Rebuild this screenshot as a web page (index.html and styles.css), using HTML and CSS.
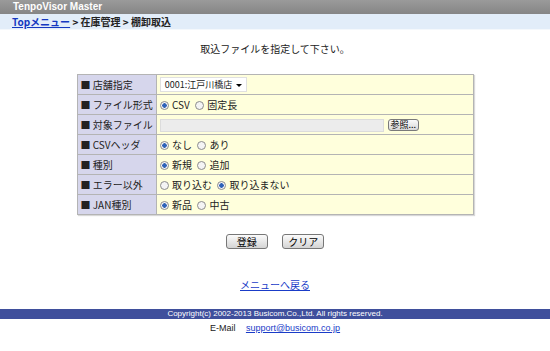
FILE: index.html
```html
<!DOCTYPE html>
<html lang="ja">
<head>
    <meta charset="UTF-8">
    <title>TenpoVisor Master</title>
    <link rel="stylesheet" href="styles.css">
</head>
<body>
    <header class="title-bar">TenpoVisor Master</header>
    <nav class="crumbs">
        <a href="#">Topメニュー</a> &gt; 在庫管理 &gt; 棚卸取込
    </nav>

    <p class="message">取込ファイルを指定して下さい。</p>

    <!-- Import form -->
    <table class="form-table">
        <tr>
            <th>■ 店舗指定</th>
            <td>
                <span class="select">0001:江戸川橋店<span class="arrow"></span></span>
            </td>
        </tr>
        <tr>
            <th>■ ファイル形式</th>
            <td>
                <label><input type="radio" name="fmt" checked> CSV</label>
                <label><input type="radio" name="fmt"> 固定長</label>
            </td>
        </tr>
        <tr>
            <th>■ 対象ファイル</th>
            <td>
                <span class="file-box"></span><button class="small-btn">参照...</button>
            </td>
        </tr>
        <tr>
            <th>■ CSVヘッダ</th>
            <td>
                <label><input type="radio" name="hdr" checked> なし</label>
                <label><input type="radio" name="hdr"> あり</label>
            </td>
        </tr>
        <tr>
            <th>■ 種別</th>
            <td>
                <label><input type="radio" name="kind" checked> 新規</label>
                <label><input type="radio" name="kind"> 追加</label>
            </td>
        </tr>
        <tr>
            <th>■ エラー以外</th>
            <td>
                <label><input type="radio" name="err"> 取り込む</label>
                <label><input type="radio" name="err" checked> 取り込まない</label>
            </td>
        </tr>
        <tr>
            <th>■ JAN種別</th>
            <td>
                <label><input type="radio" name="jan" checked> 新品</label>
                <label><input type="radio" name="jan"> 中古</label>
            </td>
        </tr>
    </table>

    <div class="actions">
        <button class="button">登録</button>
        <button class="button">クリア</button>
    </div>

    <p class="back"><a href="#">メニューへ戻る</a></p>

    <footer>
        <div class="copyright">Copyright(c) 2002-2013 Busicom.Co.,Ltd. All rights reserved.</div>
        <div class="mail">E-Mail <a href="#">support@busicom.co.jp</a></div>
    </footer>
</body>
</html>
```

FILE: styles.css
```css
/* General */
body {
    margin: 0;
    font-family: "Noto Sans CJK JP", "Liberation Sans", sans-serif;
    font-size: 11px;
    color: #222;
    background: #fff;
}

a {
    color: #1a3cc8;
}

.title-bar {
    height: 14px;
    line-height: 14px;
    padding-left: 13px;
    background: linear-gradient(to bottom, #9a9a9a, #858585);
    color: #fff;
    font-family: "Liberation Sans", sans-serif;
    font-size: 10px;
    font-weight: bold;
}

.crumbs {
    height: 15px;
    line-height: 15px;
    padding-left: 12px;
    background: #e2edf9;
    border-bottom: 1px solid #f4f8fc;
    font-weight: bold;
    font-size: 10px;
}

.crumbs a {
    color: #1438c0;
}

.message {
    margin: 11px 0 0;
    height: 15px;
    line-height: 15px;
    text-align: center;
    font-size: 10px;
}

/* Form table */
.form-table {
    margin: 18px auto 0;
    width: 397px;
    border-collapse: collapse;
    border: 1px solid #a9a9a9;
    box-shadow: 1px 1px 1px #d8d8d8;
}

.form-table th,
.form-table td {
    height: 19px;
    padding: 0 3px;
    border: 1px solid #b4b4b4;
    text-align: left;
    font-size: 10px;
    line-height: 14px;
    white-space: nowrap;
}

.form-table th {
    width: 72px;
    background: #d6d6ec;
    font-weight: normal;
}

.form-table td {
    background: #ffffdc;
}

.form-table label {
    margin-right: 3px;
}

.form-table input[type="radio"] {
    appearance: none;
    width: 9px;
    height: 9px;
    margin: 0 1px 0 0;
    vertical-align: -1px;
    border: 1px solid #8c8c8c;
    border-radius: 50%;
    background: #f4f4f4;
}

.form-table input[type="radio"]:checked {
    background: radial-gradient(circle, #2f62b8 0, #2f62b8 2px, #f4f4f4 2.5px);
}

.select {
    display: inline-block;
    position: relative;
    height: 15px;
    box-sizing: border-box;
    line-height: 13px;
    padding: 0 14px 0 4px;
    vertical-align: middle;
    font-size: 9px;
    background: #fff;
    border: 1px solid #e0e0e0;
}

.select .arrow {
    position: absolute;
    right: 4px;
    top: 6px;
    border-left: 3px solid transparent;
    border-right: 3px solid transparent;
    border-top: 3px solid #000;
}

.file-box {
    display: inline-block;
    width: 222px;
    height: 11px;
    vertical-align: middle;
    background: #ececec;
    border: 1px solid #dcdcdc;
}

.small-btn {
    margin-left: 4px;
    width: 31px;
    height: 12px;
    padding: 0;
    vertical-align: middle;
    font-family: inherit;
    font-size: 9px;
    line-height: 10px;
    background: linear-gradient(to bottom, #fafafa, #d8d8d8);
    border: 1px solid #7a7a7a;
    border-radius: 3px;
}

/* Buttons */
.actions {
    margin-top: 18px;
    text-align: center;
}

.button {
    width: 42px;
    height: 15px;
    margin: 0 6px;
    padding: 0;
    font-family: inherit;
    font-size: 10px;
    line-height: 13px;
    background: linear-gradient(to bottom, #fbfbfb, #d4d4d4);
    border: 1px solid #777;
    border-radius: 3px;
}

.back {
    margin: 29px 0 0;
    text-align: center;
    font-size: 10px;
    line-height: 14px;
}

/* Footer */
footer {
    margin-top: 17px;
    text-align: center;
}

.copyright {
    height: 10px;
    line-height: 10px;
    background: #3f4f9c;
    color: #fff;
    font-family: "Liberation Sans", sans-serif;
    font-size: 8px;
}

.mail {
    margin-top: 3px;
    font-family: "Liberation Sans", sans-serif;
    font-size: 9px;
    line-height: 12px;
}

.mail a {
    margin-left: 8px;
}
```
